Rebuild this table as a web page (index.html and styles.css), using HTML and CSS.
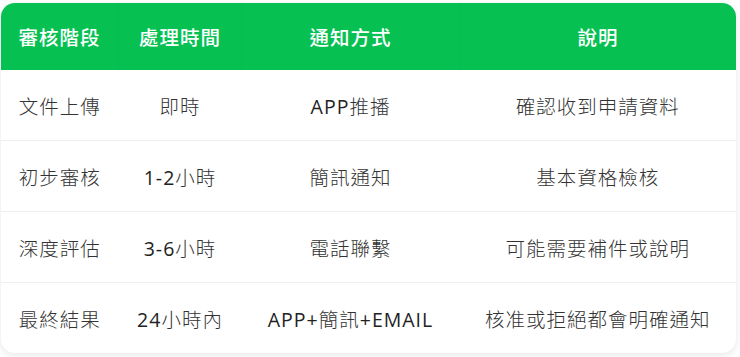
FILE: index.html
```html
<!DOCTYPE html>
<html lang="zh-Hant">
<head>
<meta charset="utf-8">
<link rel="stylesheet" href="styles.css">
</head>
<body>
<div class="wrap">
  <div class="card">
    <table class="tbl">
      <thead>
        <tr>
          <th class="c1">審核階段</th>
          <th class="c2">處理時間</th>
          <th class="c3">通知方式</th>
          <th class="c4">說明</th>
        </tr>
      </thead>
      <tbody>
        <tr><td>文件上傳</td><td>即時</td><td><span class="lat">APP</span>推播</td><td>確認收到申請資料</td></tr>
        <tr><td>初步審核</td><td><span class="lat">1-2</span>小時</td><td>簡訊通知</td><td>基本資格檢核</td></tr>
        <tr><td>深度評估</td><td><span class="lat">3-6</span>小時</td><td>電話聯繫</td><td>可能需要補件或說明</td></tr>
        <tr><td>最終結果</td><td><span class="lat">24</span>小時內</td><td><span class="lat">APP+</span>簡訊<span class="lat">+EMAIL</span></td><td>核准或拒絕都會明確通知</td></tr>
      </tbody>
    </table>
  </div>
</div>
</body>
</html>
```
FILE: styles.css
```css
html, body {
  margin: 0;
  padding: 0;
  background: #f4f4f4;
}
body {
  font-family: "Open Sans", "Noto Sans CJK TC", sans-serif;
}
.wrap {
  padding: 3px 4px 6px 1px;
  background: #ffffff;
}
.card {
  width: 735px;
  border-radius: 14px;
  overflow: hidden;
  background: #ffffff;
  box-shadow: 0 2px 8px rgba(0, 0, 0, 0.10);
}
.tbl {
  width: 100%;
  border-collapse: collapse;
  table-layout: fixed;
}
.tbl th {
  background: #06c152;
  color: #ffffff;
  font-size: 19.5px;
  font-weight: 500;
  letter-spacing: 1px;
  height: 67px;
  padding: 0;
  text-align: center;
  border-right: 1px solid rgba(0, 0, 0, 0.025);
}
.tbl th:last-child { border-right: none; }
.c1 { width: 117px; }
.c2 { width: 122px; }
.c3 { width: 217px; }
.tbl td {
  height: 70px;
  padding: 0;
  text-align: center;
  font-size: 19.5px;
  font-weight: 300;
  letter-spacing: 1px;
  color: #333333;
  border-top: 1px solid #eeeeee;
}
.tbl tbody tr:first-child td { border-top: none; }
.lat {
  font-weight: 400;
  color: #222222;
}
```
